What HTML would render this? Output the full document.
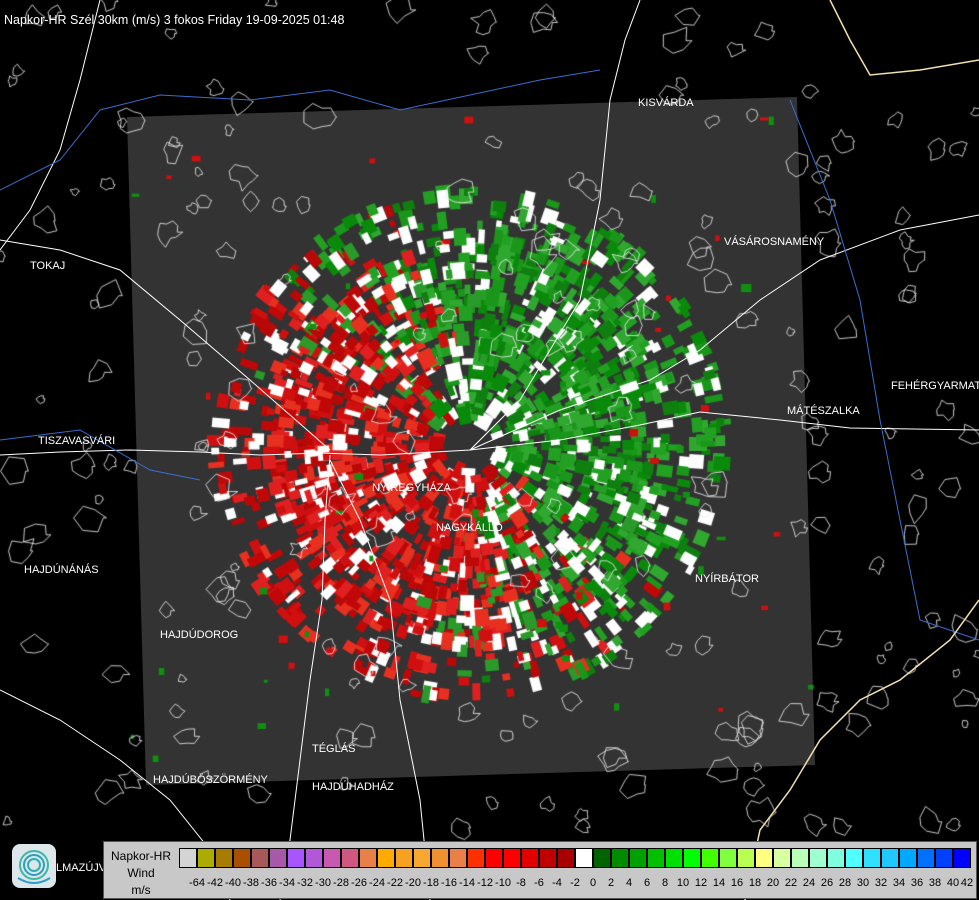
<!DOCTYPE html>
<html><head><meta charset="utf-8"><style>
html,body{margin:0;padding:0;background:#000;}
#w{position:relative;width:979px;height:900px;overflow:hidden;background:#000;font-family:"Liberation Sans",sans-serif;}
canvas,svg{position:absolute;left:0;top:0;}
.t{position:absolute;color:#fff;font-size:11px;white-space:nowrap;}
#leg{position:absolute;left:103px;top:841px;width:872px;height:56px;background:#c8c8c8;border:1px solid #555;}
.cell{position:absolute;top:6px;height:20px;width:18px;box-sizing:border-box;border:1px solid #000;}
.lb{position:absolute;top:35px;font-size:11px;color:#000;transform:translateX(-50%);}
</style></head><body><div id="w">
<svg width="979" height="900">
<polygon points="127,117 797,97 815,765 146,785" fill="#333"/>
</svg>
<canvas id="c" width="979" height="900"></canvas>
<svg width="979" height="900">
<g fill="none" stroke="#fff" stroke-width="1">
<polyline points="0,455 60,452 130,450 200,452 260,455 320,453 380,455 470,450 560,440 640,425 700,412 780,420 850,428 979,430"/>
<polyline points="330,455 325,520 322,600 310,680 300,760 290,840 280,900"/>
<polyline points="470,450 520,400 580,300 600,200 610,100 625,40 640,0"/>
<polyline points="470,450 560,410 650,380 700,350 760,300 820,260 900,230 979,215"/>
<polyline points="330,450 250,380 180,320 120,270 60,250 0,240"/>
<polyline points="0,690 60,720 120,760 170,800 210,850 230,900"/>
<polyline points="330,460 360,520 390,600 400,700 420,800 430,900"/>
<polyline points="100,0 80,80 60,150 30,210 0,250"/>
</g>
<g fill="none" stroke="#3a6ecf" stroke-width="1">
<polyline points="0,190 60,160 100,110 160,95 250,100 330,90 400,110 470,95 540,80 600,70"/>
<polyline points="0,440 80,430 150,470 200,480"/>
<polyline points="790,100 830,200 860,300 880,420 900,520 920,620 979,640"/>
</g>
<polyline fill="none" stroke="#f3e0b0" stroke-width="1.5" points="830,0 850,40 870,75 920,70 979,60"/>
<polyline fill="none" stroke="#f3e0b0" stroke-width="1.5" points="979,600 950,640 900,680 860,700 820,740 790,790 760,830 745,900"/>
</svg>
<div class="t" style="left:4px;top:13px;font-size:12.5px">Napkor-HR Szél 30km (m/s) 3 fokos Friday 19-09-2025 01:48</div>
<div class="t" style="left:638px;top:97px">KISVÁRDA</div>
<div class="t" style="left:724px;top:236px">VÁSÁROSNAMÉNY</div>
<div class="t" style="left:30px;top:260px">TOKAJ</div>
<div class="t" style="left:891px;top:380px">FEHÉRGYARMAT</div>
<div class="t" style="left:787px;top:405px">MÁTÉSZALKA</div>
<div class="t" style="left:38px;top:435px">TISZAVASVÁRI</div>
<div class="t" style="left:372px;top:482px">NYÍREGYHÁZA</div>
<div class="t" style="left:436px;top:522px">NAGYKÁLLÓ</div>
<div class="t" style="left:24px;top:564px">HAJDÚNÁNÁS</div>
<div class="t" style="left:695px;top:573px">NYÍRBÁTOR</div>
<div class="t" style="left:160px;top:629px">HAJDÚDOROG</div>
<div class="t" style="left:312px;top:743px">TÉGLÁS</div>
<div class="t" style="left:153px;top:774px">HAJDÚBÖSZÖRMÉNY</div>
<div class="t" style="left:312px;top:781px">HAJDÚHADHÁZ</div>
<div class="t" style="left:56px;top:862px">LMAZÚJVÁROS</div>
<div style="position:absolute;left:12px;top:844px;width:44px;height:44px;border-radius:8px;background:#dde6ea;">
<svg width="44" height="44"><g fill="none" stroke-width="2"><circle cx="22" cy="21" r="14" stroke="#3cb8a8"/><circle cx="22" cy="21" r="10" stroke="#2a9fc0"/><circle cx="22" cy="21" r="6" stroke="#2ab0b0"/><path d="M6 34 Q22 44 38 34" stroke="#2aa0c8"/></g></svg></div>
<div id="leg">
<div style="position:absolute;left:0;width:74px;top:6px;text-align:center;font-size:12px;line-height:17px;">Napkor-HR<br>Wind<br>m/s</div>
<div id="cells"></div>
</div>
<script>
var cols=["#d4d4d4","#acac00","#a87c00","#a85000","#a85858","#a858a8","#a855ff","#b058d8","#c858b0","#d05880","#e88048","#ffaa00","#f8a020","#f8a830","#f09030","#e88048","#ff3000","#ff0000","#ff0000","#e00000","#c00000","#a80000","#ffffff","#006400","#008c00","#00a000","#00c000","#00e000","#00ff00","#40ff00","#80ff40","#b8ff50","#ffff80","#d8ffa0","#b8ffb8","#a0ffd0","#80ffe0","#50ffff","#30e0ff","#20c8ff","#00a8ff","#0070ff","#0040ff","#0000ff"];
var labs=["-64","-42","-40","-38","-36","-34","-32","-30","-28","-26","-24","-22","-20","-18","-16","-14","-12","-10","-8","-6","-4","-2","0","2","4","6","8","10","12","14","16","18","20","22","24","26","28","30","32","34","36","38","40","42"];
var h="";for(var i=0;i<cols.length;i++){var x=75+i*18;h+='<div class="cell" style="left:'+x+'px;background:'+cols[i]+'"></div>';}
for(var i=0;i<labs.length;i++){var x=75+(i+1)*18;if(i==labs.length-1)x=75+44*18-4;h+='<div class="lb" style="left:'+x+'px">'+labs[i]+'</div>';}
document.getElementById("cells").innerHTML=h;
var s=12345;function R(){s^=s<<13;s^=s>>>17;s^=s<<5;return ((s>>>0)%100000)/100000;}
var c=document.getElementById("c").getContext("2d");
var G=["#0a8a0a","#1a961a","#22a022","#0f7f0f","#30a830"],Rd=["#d01010","#e02020","#c00808","#e83020","#b80808"];
for(var i=0;i<2600;i++){var r=255*Math.sqrt(R()),a=R()*6.2832;
 if(r<25)continue;
 if(r>200&&R()<0.55)continue;
 var x=470+r*Math.cos(a),y=445+r*Math.sin(a);
 var sc=Math.cos(a+0.52)+(R()-0.5)*1.3;var col;
 if(R()<0.17)col="#fff";else if(sc>0.1)col=G[(R()*5)|0];else if(sc<-0.1)col=Rd[(R()*5)|0];else col=R()<0.5?"#fff":"#2a9a2a";
 var L=6+R()*12,W=5+R()*10;
 c.save();c.translate(x,y);c.rotate(a);c.fillStyle=col;c.fillRect(-L/2,-W/2,L,W);c.restore();}
for(var i=0;i<60;i++){var x=130+R()*680,y=110+R()*660;c.fillStyle=R()<0.5?"#d01010":"#109010";c.fillRect(x,y,3+R()*8,3+R()*6);}
c.strokeStyle="rgba(235,235,235,0.85)";c.lineWidth=1;
for(var i=0;i<220;i++){var cx=R()*979,cy=R()*830,rr=4+R()*12,n=6+((R()*6)|0);
 c.beginPath();for(var k=0;k<=n;k++){var t=k/n*6.2832,q=rr*(0.5+R()*0.7);var px=cx+q*Math.cos(t),py=cy+q*Math.sin(t);if(k==0)c.moveTo(px,py);else c.lineTo(px,py);}c.closePath();c.stroke();}
</script>
</div></body></html>
